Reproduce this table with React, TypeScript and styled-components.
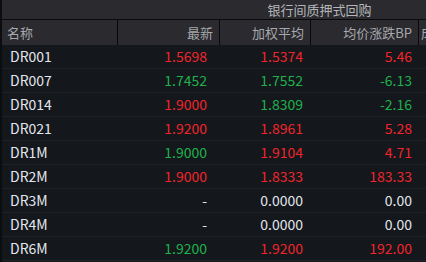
import React from 'react';
import styled, { createGlobalStyle } from 'styled-components';

const Global = createGlobalStyle`
  html, body {
    margin: 0;
    padding: 0;
    background: #14171b;
    overflow: hidden;
  }
  body {
    font-family: "Noto Sans CJK SC", "Noto Sans", sans-serif;
  }
`;

const COLS = '116px 102px 91px 108px 120px';

const Panel = styled.div`
  width: 426px;
  height: 262px;
  overflow: hidden;
  background: #14171b;
  border-left: 2px solid #0c0d0f;
  box-sizing: border-box;
`;

const GroupBar = styled.div`
  display: grid;
  grid-template-columns: ${COLS};
  height: 19px;
  background: #2a2a2f;
  border-bottom: 1px solid #0a0a0b;
`;

const GroupTitle = styled.div<{ $start: number; $span: number }>`
  grid-column: ${(p) => p.$start} / span ${(p) => p.$span};
  text-align: center;
  font-size: 13px;
  line-height: 19px;
  color: #b4b6ba;
`;

const HeadRow = styled.div`
  display: grid;
  grid-template-columns: ${COLS};
  height: 25px;
  background: #2a2a2f;
`;

const HeadCell = styled.div<{ $left?: boolean; $pl?: number }>`
  font-size: 13px;
  line-height: 25px;
  color: #a6a8ac;
  text-align: ${(p) => (p.$left ? 'left' : 'right')};
  padding: ${(p) => (p.$left ? `0 0 0 ${p.$pl ?? 5}px` : '0 6px 0 0')};
  border-right: 1px solid #08080a;
  white-space: nowrap;
  overflow: hidden;
`;

const Row = styled.div`
  display: grid;
  grid-template-columns: ${COLS};
  height: 23px;
  border-bottom: 1px solid #1f2227;
`;

type Tone = 'up' | 'down' | 'flat';

const toneColor = (t: Tone) =>
  t === 'up' ? '#f0252c' : t === 'down' ? '#1fb14d' : '#e1e6ee';

const Cell = styled.div<{ $tone?: Tone; $left?: boolean; $pr?: number }>`
  font-size: 14px;
  line-height: 23px;
  color: ${(p) => toneColor(p.$tone || 'flat')};
  text-align: ${(p) => (p.$left ? 'left' : 'right')};
  padding: ${(p) => (p.$left ? '0 0 0 8px' : `0 ${p.$pr ?? 8}px 0 0`)};
  white-space: nowrap;
`;

type Item = {
  name: string;
  last: string;
  lastTone: Tone;
  avg: string;
  avgTone: Tone;
  bp: string;
  bpTone: Tone;
};

const rows: Item[] = [
  { name: 'DR001', last: '1.5698', lastTone: 'up', avg: '1.5374', avgTone: 'up', bp: '5.46', bpTone: 'up' },
  { name: 'DR007', last: '1.7452', lastTone: 'down', avg: '1.7552', avgTone: 'down', bp: '-6.13', bpTone: 'down' },
  { name: 'DR014', last: '1.9000', lastTone: 'up', avg: '1.8309', avgTone: 'down', bp: '-2.16', bpTone: 'down' },
  { name: 'DR021', last: '1.9200', lastTone: 'up', avg: '1.8961', avgTone: 'up', bp: '5.28', bpTone: 'up' },
  { name: 'DR1M', last: '1.9000', lastTone: 'down', avg: '1.9104', avgTone: 'up', bp: '4.71', bpTone: 'up' },
  { name: 'DR2M', last: '1.9000', lastTone: 'up', avg: '1.8333', avgTone: 'up', bp: '183.33', bpTone: 'up' },
  { name: 'DR3M', last: '-', lastTone: 'flat', avg: '0.0000', avgTone: 'flat', bp: '0.00', bpTone: 'flat' },
  { name: 'DR4M', last: '-', lastTone: 'flat', avg: '0.0000', avgTone: 'flat', bp: '0.00', bpTone: 'flat' },
  { name: 'DR6M', last: '1.9200', lastTone: 'down', avg: '1.9200', avgTone: 'up', bp: '192.00', bpTone: 'up' },
];

export default function App() {
  return (
    <Panel>
      <Global />
      <GroupBar>
        <GroupTitle $start={3} $span={2}>银行间质押式回购</GroupTitle>
      </GroupBar>
      <HeadRow>
        <HeadCell $left>名称</HeadCell>
        <HeadCell>最新</HeadCell>
        <HeadCell>加权平均</HeadCell>
        <HeadCell>均价涨跌BP</HeadCell>
        <HeadCell $left $pl={2}>成交量</HeadCell>
      </HeadRow>
      {rows.map((r) => (
        <Row key={r.name}>
          <Cell $left>{r.name}</Cell>
          <Cell $tone={r.lastTone} $pr={13}>{r.last}</Cell>
          <Cell $tone={r.avgTone}>{r.avg}</Cell>
          <Cell $tone={r.bpTone} $pr={7}>{r.bp}</Cell>
          <Cell />
        </Row>
      ))}
    </Panel>
  );
}
